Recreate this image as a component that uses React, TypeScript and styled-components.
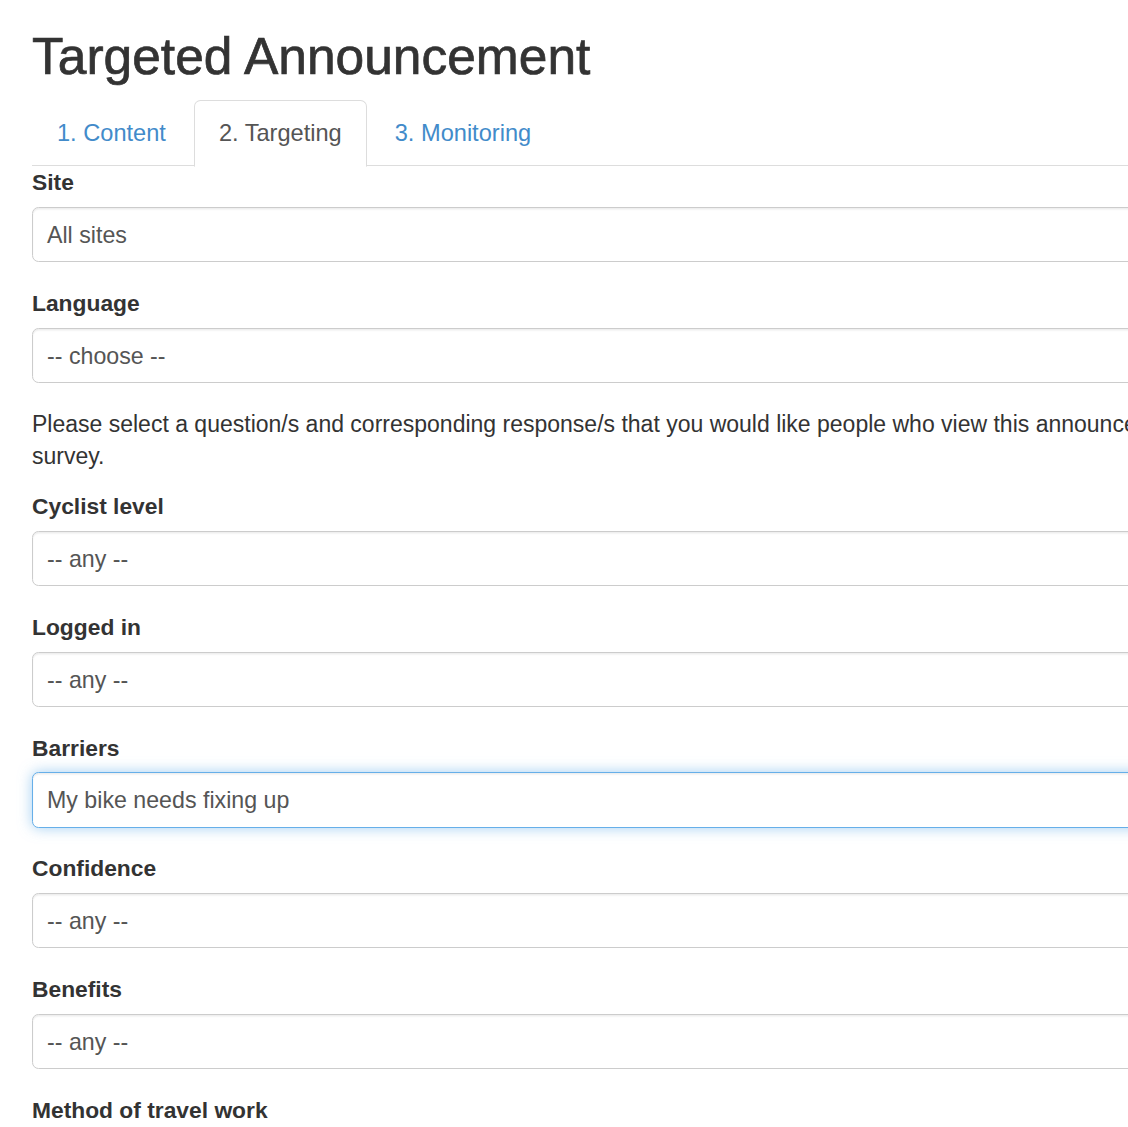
import React from 'react';
import styled, { createGlobalStyle, css } from 'styled-components';

const GlobalStyle = createGlobalStyle`
  html, body {
    margin: 0;
    padding: 0;
    background: #fff;
    overflow: hidden;
  }
  body {
    font-family: "Liberation Sans", Arial, Helvetica, sans-serif;
    font-size: 22.8px;
    line-height: 32.6px;
    color: #333;
  }
`;

const Page = styled.div`
  width: 1470px;
  padding: 0 32px;
`;

const Title = styled.h2`
  margin: 29px 0 17px;
  font-size: 51.5px;
  line-height: 54px;
  font-weight: 500;
  color: #333;
  -webkit-text-stroke: 0.7px #333;
`;

const TabList = styled.ul`
  display: flex;
  margin: 0;
  padding: 0;
  list-style: none;
  border-bottom: 1.6px solid #ddd;
`;

const Tab = styled.li<{ $active?: boolean }>`
  margin-right: 3px;
  margin-bottom: -1.6px;
  padding: 16px 24px;
  font-size: 23.6px;
  line-height: 32.6px;
  border: 1.6px solid transparent;
  border-radius: 6.5px 6.5px 0 0;
  color: #428bca;
  cursor: pointer;
  ${(p) =>
    p.$active &&
    css`
      color: #555;
      background: #fff;
      border-color: #ddd;
      border-bottom-color: transparent;
      cursor: default;
    `}
`;

const Group = styled.div`
  margin-bottom: 24.6px;
`;

const Label = styled.label`
  display: block;
  margin-bottom: 8.2px;
  font-weight: 700;
  line-height: 32.6px;
`;

const Field = styled.div<{ $focused?: boolean }>`
  box-sizing: border-box;
  height: 55.4px;
  padding: 11px 14px;
  line-height: 32px;
  font-size: 23.2px;
  color: #555;
  background: #fff;
  border: 1.6px solid #ccc;
  border-radius: 6.5px;
  box-shadow: inset 0 1.6px 1.6px rgba(0, 0, 0, 0.075);
  ${(p) =>
    p.$focused &&
    css`
      border-color: #66afe9;
      box-shadow: inset 0 1.6px 1.6px rgba(0, 0, 0, 0.075), 0 0 14px rgba(102, 175, 233, 0.6);
    `}
`;

const Help = styled.p`
  margin: 3px 0 17.3px;
  width: 1440px;
  font-size: 23px;
`;

const fields: { label: string; value: string; focused?: boolean }[] = [
  { label: 'Cyclist level', value: '-- any --' },
  { label: 'Logged in', value: '-- any --' },
  { label: 'Barriers', value: 'My bike needs fixing up', focused: true },
  { label: 'Confidence', value: '-- any --' },
  { label: 'Benefits', value: '-- any --' },
  { label: 'Method of travel work', value: '-- any --' },
];

export default function App() {
  return (
    <>
      <GlobalStyle />
      <Page>
        <Title>Targeted Announcement</Title>
        <TabList>
          <Tab>1. Content</Tab>
          <Tab $active>2. Targeting</Tab>
          <Tab>3. Monitoring</Tab>
        </TabList>
        <Group>
          <Label>Site</Label>
          <Field>All sites</Field>
        </Group>
        <Group>
          <Label>Language</Label>
          <Field>-- choose --</Field>
        </Group>
        <Help>
          Please select a question/s and corresponding response/s that you would like people who view
          this announcement to have answered in their survey.
        </Help>
        {fields.map((f) => (
          <Group key={f.label}>
            <Label>{f.label}</Label>
            <Field $focused={f.focused}>{f.value}</Field>
          </Group>
        ))}
      </Page>
    </>
  );
}
